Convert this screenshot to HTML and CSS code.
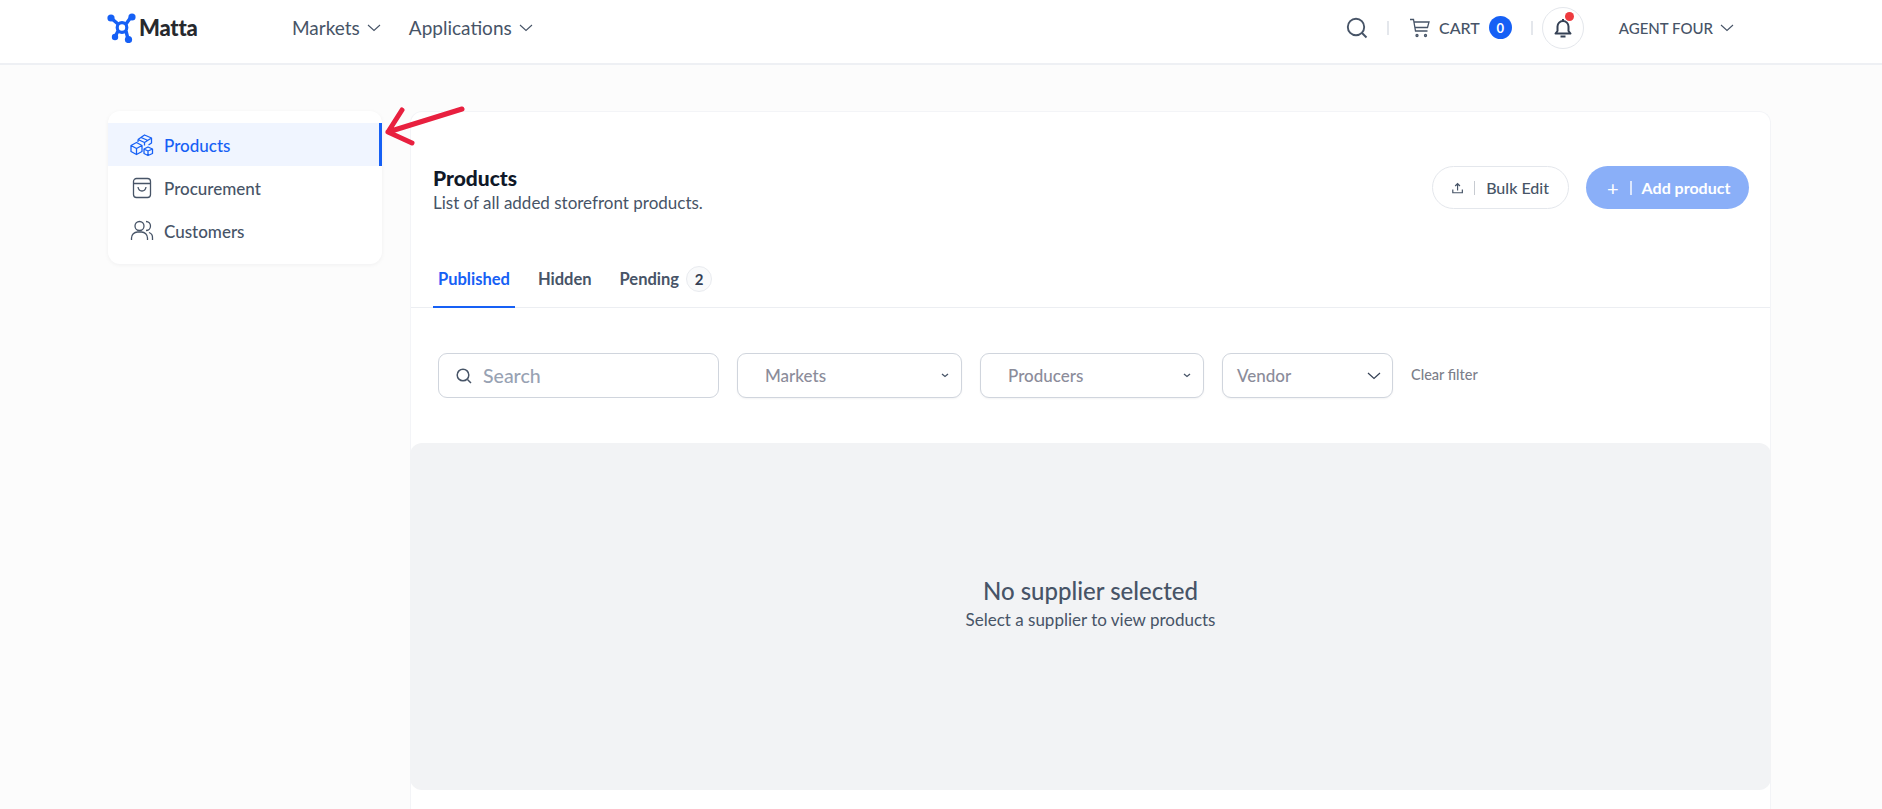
FILE: index.html
```html
<!DOCTYPE html>
<html lang="en">
<head>
  <meta charset="UTF-8">
  <meta name="viewport" content="width=device-width, initial-scale=1.0">
  <title>Matta - Products</title>
  <link rel="stylesheet" href="styles.css">
</head>
<body>
  <header class="topbar">
    <div class="brand">
      <svg class="brand-icon" width="30" height="30" viewBox="0 0 30 30" fill="none" stroke="#1660f5">
        <path d="M4 5 L11 11 M24 4 L19 11 M8 24 L11 18 M21 26 L19 18" stroke-width="3.4"/>
        <circle cx="15" cy="14.5" r="4.8" stroke-width="3.2"/>
        <circle cx="4" cy="5" r="3.6" fill="#1660f5" stroke="none"/>
        <circle cx="25" cy="4" r="3.6" fill="#1660f5" stroke="none"/>
        <circle cx="8" cy="24" r="3.2" fill="#1660f5" stroke="none"/>
        <circle cx="21.5" cy="26.5" r="3.6" fill="#1660f5" stroke="none"/>
      </svg>
      <span class="brand-name">Matta</span>
    </div>
    <nav class="topnav">
      <a class="topnav-link">Markets
        <svg class="chev" width="14" height="8" viewBox="0 0 14 8"><path d="M1 1l6 5.5L13 1"/></svg>
      </a>
      <a class="topnav-link">Applications
        <svg class="chev" width="14" height="8" viewBox="0 0 14 8"><path d="M1 1l6 5.5L13 1"/></svg>
      </a>
    </nav>
    <div class="topbar-right">
      <svg class="line-icon search-top" width="22" height="22" viewBox="0 0 22 22"><circle cx="10" cy="10" r="8.200"/><path d="M16 16l4.500 4.500"/></svg>
      <span class="sep sep-search"></span>
      <svg class="line-icon cart-icon" width="22" height="22" viewBox="0 0 22 22"><path d="M1 2.500h3.500l2 11.500h12M4.900 5H20l-1.500 5.500H5.900"/><circle cx="8" cy="18.500" r="1"/><circle cx="16.500" cy="18.500" r="1"/></svg>
      <span class="cart-label">CART</span>
      <span class="cart-count">0</span>
      <span class="sep sep-cart"></span>
      <span class="bell">
        <svg class="bell-icon" width="18" height="20" viewBox="0 0 18 20"><path d="M3.500 13V8.500a5.500 5.500 0 0 1 11 0V13l2 2.500h-15zM6.500 18.500h5M9 1v2"/></svg>
        <span class="bell-dot"></span>
      </span>
      <a class="user">AGENT FOUR
        <svg class="chev" width="14" height="8" viewBox="0 0 14 8"><path d="M1 1l6 5.500L13 1"/></svg>
      </a>
    </div>
  </header>

  <div class="page">
    <aside class="side">
      <a class="side-item active">
        <svg class="side-icon" width="24" height="24" viewBox="0 0 24 24"><path d="M1 12.500l5.500-3 5.500 3v6l-5.500 3-5.500-3zM1 12.500l5.500 3 5.500-3M6.500 15.500v6M14 16l4-2 4.500 2v4.500l-4.500 2-4-2zM14 16l4 2 4.500-2M18 18v4.500M8 6.500l6.500-4.500 7 3v5l-3 2M8 6.500l6.500 3 7-4.500M14.500 9.500v3M8 6.500v2.500M11 4.500l7 3"/></svg>
        Products
      </a>
      <a class="side-item">
        <svg class="side-icon" width="24" height="24" viewBox="0 0 24 24"><rect x="3.500" y="2.500" width="17" height="19" rx="3"/><path d="M3.500 7.500h17M8 11c.5 3 2 4 4 4s3.500-1 4-4"/></svg>
        Procurement
      </a>
      <a class="side-item">
        <svg class="side-icon" width="24" height="24" viewBox="0 0 24 24"><circle cx="9.500" cy="7" r="4.500"/><path d="M1.500 21v-2a6 6 0 0 1 6-6h4a6 6 0 0 1 6 6v2M16 2.500a4.500 4.500 0 0 1 0 9M19 13.500a5.500 5.500 0 0 1 3.500 5.500v2"/></svg>
        Customers
      </a>
    </aside>

    <main class="card">
      <div class="card-head">
        <div>
          <h1 class="title">Products</h1>
          <p class="subtitle">List of all added storefront products.</p>
        </div>
        <div class="actions">
          <button class="btn btn-ghost">
            <svg class="line-icon" width="14" height="14" viewBox="0 0 14 14"><path d="M1 9v4h12V9M7 10V2M4 4.500L7 1.500l3 3"/></svg>
            <span class="btn-sep"></span>
            Bulk Edit
          </button>
          <button class="btn btn-primary">
            <span class="plus">+</span>
            <span class="btn-sep"></span>
            Add product
          </button>
        </div>
      </div>

      <div class="tabs">
        <a class="tab active">Published</a>
        <a class="tab">Hidden</a>
        <a class="tab">Pending <span class="tab-count">2</span></a>
      </div>

      <div class="filters">
        <label class="field field-search">
          <svg class="line-icon" width="16" height="16" viewBox="0 0 16 16"><circle cx="7" cy="7" r="5.800"/><path d="M11.500 11.500l3.500 3.500"/></svg>
          <span class="placeholder">Search</span>
        </label>
        <div class="field field-select field-markets">
          <span>Markets</span>
          <svg class="tiny-chev" width="8" height="5" viewBox="0 0 8 5"><path d="M1 1l3 2.500L7 1"/></svg>
        </div>
        <div class="field field-select field-producers">
          <span>Producers</span>
          <svg class="tiny-chev" width="8" height="5" viewBox="0 0 8 5"><path d="M1 1l3 2.500L7 1"/></svg>
        </div>
        <div class="field field-select field-vendor">
          <span>Vendor</span>
          <svg class="vendor-chev" width="14" height="8" viewBox="0 0 14 8"><path d="M1 1l6 5.500L13 1"/></svg>
        </div>
        <a class="clear">Clear filter</a>
      </div>

      <section class="empty">
        <h2 class="empty-title">No supplier selected</h2>
        <p class="empty-text">Select a supplier to view products</p>
      </section>
    </main>
  </div>

  <!-- annotation drawn over the screenshot -->
  <svg class="arrow" width="90" height="50" viewBox="0 0 90 50" fill="none">
    <path d="M82 9L8 32M22 10L8 32L32 43" stroke="#e8203f" stroke-width="5" stroke-linecap="round" stroke-linejoin="round"/>
  </svg>
</body>
</html>
```

FILE: styles.css
```css
html, body { margin: 0; height: 809px; overflow: hidden; }
body { font-family: "Lato", "Open Sans", sans-serif; background: #fcfcfc; color: #475467; position: relative; }
h1, h2, p { margin: 0; }
button { font-family: inherit; white-space: nowrap; }

.topbar { height: 63px; background: #fff; border-bottom: 2px solid #eef0f4; display: flex; align-items: center; padding: 0 107px; }
.topbar > * { margin-bottom: 8px; }
.brand { display: flex; align-items: center; gap: 2px; width: 185px; }
.brand-name { font-size: 22px; font-weight: 900; color: #27292e; letter-spacing: -0.2px; }
.topnav { display: flex; gap: 28px; }
.topnav-link { display: flex; align-items: center; gap: 7px; font-size: 19px; color: #475467; }
.chev { fill: none; stroke: #475467; stroke-width: 1.100; }
.line-icon { fill: none; stroke: #475467; stroke-width: 1.500; }
.search-top { stroke-width: 1.900; }
.cart-icon { stroke-width: 1.300; }
.topbar-right { margin-left: auto; display: flex; align-items: center; margin-right: 41px; }
.sep { width: 2px; height: 14px; background: #e4e7ec; }
.sep-search { margin: 0 20px 0 19px; }
.cart-label { font-size: 16px; font-weight: 500; margin: 0 9px 0 8px; }
.cart-count { width: 23px; height: 23px; border-radius: 50%; background: #1660f5; color: #fff; font-size: 13px; font-weight: 700; display: flex; align-items: center; justify-content: center; }
.sep-cart { margin: 0 9px 0 19px; }
.bell { width: 42px; height: 42px; box-sizing: border-box; border: 1px solid #e4e7ec; border-radius: 50%; display: flex; align-items: center; justify-content: center; position: relative; }
.bell-icon { fill: none; stroke: #344054; stroke-width: 2; stroke-linejoin: round; }
.bell-dot { position: absolute; top: 4px; right: 9px; width: 9px; height: 9px; border-radius: 50%; background: #ee3b3f; }
.user { display: flex; align-items: center; gap: 7px; margin-left: 35px; font-size: 15px; font-weight: 500; }

.page { display: flex; align-items: flex-start; gap: 28px; padding: 46px 111px 0 108px; }

.side { width: 274px; box-sizing: border-box; padding: 12px 0; background: #fff; border-radius: 12px; box-shadow: 0 1px 4px rgba(16, 24, 40, 0.05); flex: none; }
.side-item { display: flex; align-items: center; gap: 10px; height: 43px; box-sizing: border-box; padding: 1px 0 0 22px; font-size: 17px; font-weight: 500; color: #475467; }
.side-item.active { background: #f0f5ff; color: #1660f5; border-right: 3px solid #1660f5; }
.side-icon { fill: none; stroke: currentColor; stroke-width: 1.300; stroke-linejoin: round; }

.card { flex: 1; height: 698px; background: #fff; border: 1px solid #f3f4f7; border-bottom: 0; border-radius: 12px 12px 0 0; box-sizing: border-box; }
.card-head { display: flex; justify-content: space-between; align-items: flex-start; padding: 53px 21px 0 22px; height: 116px; box-sizing: border-box; }
.title { font-size: 21px; font-weight: 900; color: #101828; line-height: 26px; }
.subtitle { font-size: 17px; line-height: 24px; color: #475467; }
.actions { display: flex; gap: 17px; margin-top: 1px; }
.btn { height: 43px; border-radius: 22px; display: flex; align-items: center; font-size: 16px; font-weight: 700; padding: 0 19px; box-sizing: border-box; }
.btn-ghost { background: #fff; border: 1px solid #e4e7ec; color: #475467; width: 137px; font-weight: 500; }
.btn-primary { background: #8aaff8; border: 0; color: #fff; width: 163px; padding-left: 21px; }
.btn-sep { width: 1px; height: 14px; background: currentColor; opacity: .3; margin: 0 11px; flex: none; }
.btn-primary .btn-sep { width: 2px; opacity: .7; margin: 0 10px 0 11px; }
.plus { font-size: 20px; font-weight: 400; }

.tabs { display: flex; gap: 18px; height: 80px; box-sizing: border-box; padding: 0 0 0 22px; border-bottom: 1px solid #eceef2; align-items: flex-end; }
.tab { display: flex; align-items: center; gap: 7px; height: 58px; padding: 0 5px; font-size: 16.500px; font-weight: 700; color: #475467; box-sizing: border-box; margin-bottom: -1px; }
.tab.active { color: #1660f5; border-bottom: 2px solid #1660f5; padding-top: 2px; }
.tab-count { width: 26px; height: 26px; box-sizing: border-box; border: 1px solid #e9ebef; border-radius: 50%; background: #f9fafb; display: flex; align-items: center; justify-content: center; color: #344054; font-size: 15px; }

.filters { display: flex; align-items: center; gap: 18px; height: 135px; padding: 0 0 0 27px; box-sizing: border-box; }
.field { height: 45px; box-sizing: border-box; border: 1px solid #d0d5dd; border-radius: 9px; display: flex; align-items: center; background: #fff; flex: none; }
.field-search { width: 281px; padding-left: 17px; gap: 11px; }
.placeholder { font-size: 19.500px; color: #98a2b3; font-weight: 500; }
.field-select { justify-content: space-between; font-size: 17px; color: #8b8c9a; font-weight: 500; box-shadow: 0 1px 2px rgba(16, 24, 40, 0.05); }
.field-markets { width: 225px; padding: 0 12px 0 27px; }
.field-producers { width: 224px; padding: 0 12px 0 27px; }
.field-vendor { width: 171px; padding: 0 11px 0 14px; }
.tiny-chev { fill: none; stroke: #475467; stroke-width: 1.300; }
.vendor-chev { fill: none; stroke: #344054; stroke-width: 1.200; }
.clear { font-size: 14.500px; color: #7c808a; font-weight: 500; margin-bottom: 2px; }

.empty { height: 347px; background: #f2f3f5; border-radius: 12px; display: flex; flex-direction: column; align-items: center; justify-content: center; padding-bottom: 22px; box-sizing: border-box; margin: 0 -1px; }
.empty-title { font-size: 24px; font-weight: 500; line-height: 29px; color: #475467; }
.empty-text { font-size: 17px; line-height: 30px; color: #475467; }

.arrow { position: absolute; left: 380px; top: 100px; }
```
